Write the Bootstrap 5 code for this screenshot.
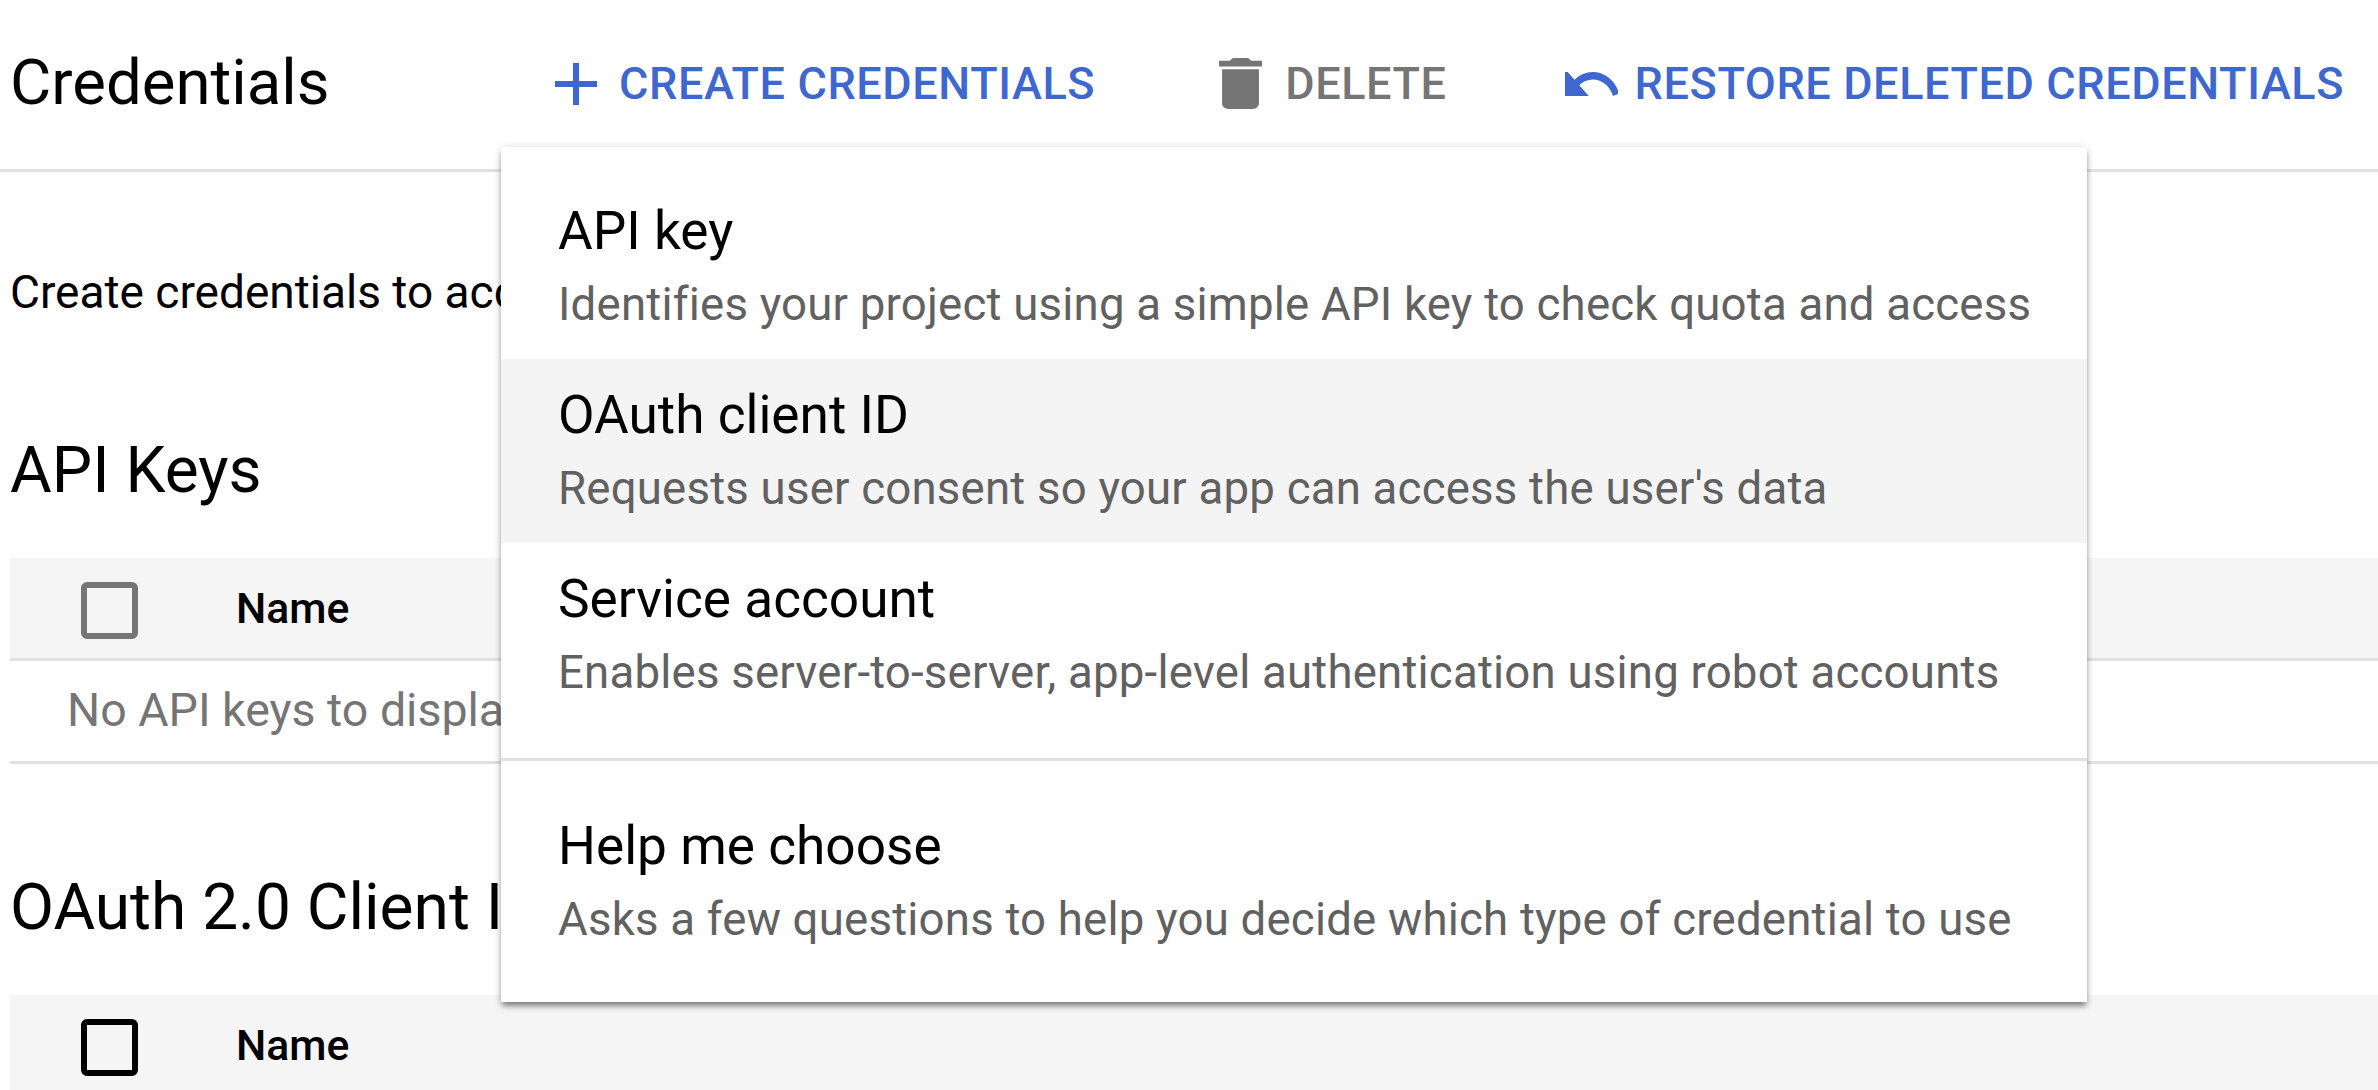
<!DOCTYPE html>
<html lang="en">
<head>
<meta charset="utf-8">
<title>Credentials</title>
<link href="https://cdn.jsdelivr.net/npm/bootstrap@5.3.0/dist/css/bootstrap.min.css" rel="stylesheet">
<style>
html,body{height:1090px;overflow:hidden;background:#fff}
body{font-family:Roboto,"Liberation Sans",sans-serif;color:#000}
.page-shell{position:relative;height:1090px;overflow:hidden}
.top-bar{height:169px;border-bottom:3px solid #e0e0e0;box-sizing:content-box;padding-left:10px}
.page-name{font-size:63.5px;font-weight:400;margin:0 0 4px;line-height:70px;width:545px}
.tool-btn{display:flex;align-items:center;font-size:45px;font-weight:500;letter-spacing:.6px;border:0;background:none;padding:0;margin-bottom:2px;white-space:nowrap;color:#3f67d0;line-height:50px}
.tool-btn.is-off{color:#757575;margin-left:124px}
.tool-btn.is-restore{margin-left:118px}
.tool-btn svg{fill:currentColor;flex:none}
.tool-btn .ico-plus{margin-right:22px}
.tool-btn .ico-trash{margin-right:23px}
.tool-btn .ico-undo{margin-right:17px}
.content-area{padding-left:10px}
.intro-text{font-size:46px;line-height:50px;margin:0;padding-top:95px}
.block-title{font-size:64px;font-weight:400;line-height:70px;margin:0;display:flex;align-items:flex-end;padding-bottom:52px}
.title-a{height:241px}
.title-b{height:231px}
.head-row{height:103px;background:#f5f5f5;border-bottom:3px solid #e0e0e0}
.tick-box{width:57px;height:57px;border:6px solid #757575;border-radius:6px;margin:4px 98px 0 71px;flex:none}
.tick-box.is-dark{border-color:#000}
.head-name{font-size:42.7px;font-weight:500;line-height:50px}
.empty-row{height:103px;border-bottom:3px solid #e0e0e0;padding-left:57px;font-size:46.5px;color:#757575}
.creds-menu{display:block;top:147px;left:501px;width:1586px;height:855px;padding:28px 0 31px;border:0;border-radius:0;background:#fff;margin:0;box-shadow:0 5px 6px -1px rgba(0,0,0,.45),0 0 8px rgba(0,0,0,.12)}
.creds-menu .dropdown-item{height:184px;padding:27px 57px 0;color:#000;white-space:nowrap}
.creds-menu .dropdown-item.is-hot{background:#f4f4f4}
.opt-name{display:block;font-size:53.2px;line-height:58px;font-weight:400}
.opt-desc{display:block;font-size:45.6px;line-height:52px;margin-top:19px;color:#616161;letter-spacing:.2px}
.creds-menu .dropdown-divider{margin:31px 0 29px;border-top:3px solid #e0e0e0;opacity:1}
</style>
</head>
<body>
<div class="page-shell">
  <header class="top-bar d-flex align-items-center">
    <h1 class="page-name">Credentials</h1>
    <button class="tool-btn" type="button"><svg class="ico-plus" width="42" height="42" viewBox="5 5 14 14"><path d="M19 13h-6v6h-2v-6H5v-2h6V5h2v6h6v2z"/></svg>CREATE CREDENTIALS</button>
    <button class="tool-btn is-off" type="button"><svg class="ico-trash" width="43" height="51" viewBox="5 3 14 18" preserveAspectRatio="none"><path d="M6 19c0 1.1.9 2 2 2h8c1.1 0 2-.9 2-2V7H6v12zM19 4h-3.5l-1-1h-5l-1 1H5v2h14V4z"/></svg>DELETE</button>
    <button class="tool-btn is-restore" type="button"><svg class="ico-undo" width="53" height="24" viewBox="2 8 20 8" preserveAspectRatio="none"><path d="M12.5 8c-2.65 0-5.05.99-6.9 2.6L2 7v9h9l-3.62-3.62c1.39-1.16 3.16-1.88 5.12-1.88 3.54 0 6.55 2.31 7.6 5.5l2.37-.78C21.08 11.03 17.15 8 12.5 8z"/></svg>RESTORE DELETED CREDENTIALS</button>
  </header>
  <main class="content-area">
    <p class="intro-text">Create credentials to access your enabled APIs.</p>
    <h2 class="block-title title-a">API Keys</h2>
    <div class="head-row d-flex align-items-center">
      <span class="tick-box"></span><span class="head-name">Name</span>
    </div>
    <div class="empty-row d-flex align-items-center">No API keys to display</div>
    <h2 class="block-title title-b">OAuth 2.0 Client IDs</h2>
    <div class="head-row d-flex align-items-center">
      <span class="tick-box is-dark"></span><span class="head-name">Name</span>
    </div>
  </main>
  <ul class="dropdown-menu show creds-menu">
    <li><a class="dropdown-item" href="#"><span class="opt-name">API key</span><span class="opt-desc">Identifies your project using a simple API key to check quota and access</span></a></li>
    <li><a class="dropdown-item is-hot" href="#"><span class="opt-name">OAuth client ID</span><span class="opt-desc">Requests user consent so your app can access the user's data</span></a></li>
    <li><a class="dropdown-item" href="#"><span class="opt-name">Service account</span><span class="opt-desc">Enables server-to-server, app-level authentication using robot accounts</span></a></li>
    <li><hr class="dropdown-divider"></li>
    <li><a class="dropdown-item" href="#"><span class="opt-name">Help me choose</span><span class="opt-desc">Asks a few questions to help you decide which type of credential to use</span></a></li>
  </ul>
</div>
<script src="https://cdn.jsdelivr.net/npm/bootstrap@5.3.0/dist/js/bootstrap.bundle.min.js"></script>
</body>
</html>
